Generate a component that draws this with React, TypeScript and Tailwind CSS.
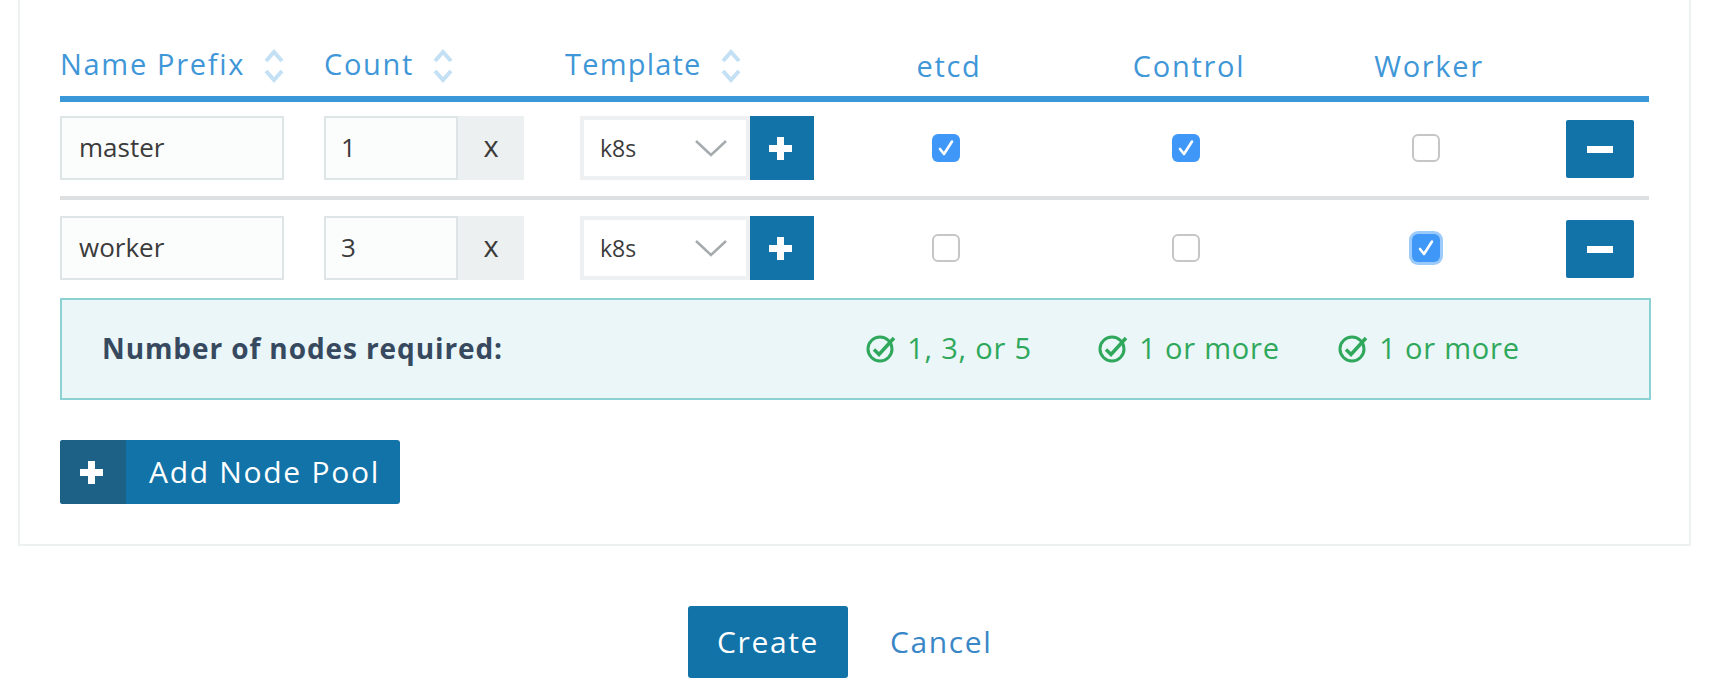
const font = "[font-family:'Open_Sans',sans-serif]";

function Sort() {
  return (
    <svg width="20" height="34" viewBox="0 0 20 34" fill="none" stroke="#c3e0f4" strokeWidth="4" className="ml-[19px] mt-[3px] shrink-0">
      <path d="M2 12 L10 3 L18 12" />
      <path d="M2 22 L10 31 L18 22" />
    </svg>
  );
}

function Plus() {
  return (
    <svg width="23" height="23" viewBox="0 0 23 23" fill="white">
      <rect x="8" y="0" width="7" height="23" />
      <rect x="0" y="8" width="23" height="7" />
    </svg>
  );
}

function Check({ on, focus }: { on?: boolean; focus?: boolean }) {
  return (
    <div className="flex justify-center pr-[6px]">
      <div
        className={
          "flex h-[28px] w-[28px] items-center justify-center rounded-[6px] " +
          (on ? "bg-[#3f97f7] " : "border-2 border-[#c6c6c6] bg-white ") +
          (focus ? "shadow-[0_0_0_3px_#9ccafb]" : "")
        }
      >
        {on && (
          <svg width="18" height="18" viewBox="0 0 18 18" fill="none" stroke="white" strokeWidth="2.6" strokeLinecap="round" strokeLinejoin="round">
            <path d="M3 10 L7 15 L15 2.5" />
          </svg>
        )}
      </div>
    </div>
  );
}

function GreenCheck() {
  return (
    <svg width="30" height="28" viewBox="0 0 30 28" fill="none" stroke="#2fa85c" className="mt-[2px] shrink-0">
      <circle cx="14" cy="14" r="12" strokeWidth="3" />
      <path d="M8 14.5 L13 19.5 L28 3" strokeWidth="3.5" />
    </svg>
  );
}

function Row({ name, count, e, c, w, focus }: { name: string; count: string; e?: boolean; c?: boolean; w?: boolean; focus?: boolean }) {
  return (
    <div className="grid grid-cols-[264px_241px_264px_240px_240px_240px_101px] items-center text-[#3b3b3b]">
      <input
        readOnly
        value={name}
        className="h-[64px] w-[224px] border-2 border-[#dde5e6] bg-[#fbfdfc] px-[17px] pb-[2px] text-[26px] outline-none"
      />
      <div className="flex h-[64px] w-[200px]">
        <input
          readOnly
          value={count}
          className="h-[64px] w-[134px] border-2 border-[#dde5e6] bg-[#fbfdfc] px-[15px] pb-[2px] text-[26px] outline-none"
        />
        <div className="flex w-[66px] items-center justify-center bg-[#edf0f1] pb-[4px] text-[29px]">x</div>
      </div>
      <div className="ml-[15px] flex h-[64px]">
        <div className="flex w-[170px] items-center justify-between border-[4px] border-[#eef0f1] bg-white pl-[16px] pr-[19px] text-[23px]">
          <span>k8s</span>
          <svg width="32" height="17" viewBox="0 0 32 17" fill="none" stroke="#a5aaad" strokeWidth="2.5">
            <path d="M1 1 L16 15 L31 1" />
          </svg>
        </div>
        <div className="flex w-[64px] items-center justify-center bg-[#1173a7] pr-[3px]">
          <Plus />
        </div>
      </div>
      <Check on={e} />
      <Check on={c} />
      <Check on={w} focus={focus} />
      <div className="flex justify-end pr-[16px] pt-[2px]">
        <div className="flex h-[58px] w-[68px] items-center justify-center rounded-[2px] bg-[#1173a7]">
          <div className="h-[7px] w-[26px] bg-white" />
        </div>
      </div>
    </div>
  );
}

function Req({ text }: { text: string }) {
  return (
    <div className="flex items-center justify-center gap-[11px]">
      <GreenCheck />
      <span>{text}</span>
    </div>
  );
}

export default function App() {
  return (
    <div className={"h-[692px] w-[1710px] overflow-hidden bg-white " + font}>
      <div className="ml-[18px] w-[1673px] border-x-2 border-b-2 border-[#eef1f1] px-[40px] pb-[40px]">
        <div className="grid h-[102px] grid-cols-[264px_241px_264px_240px_240px_240px_101px] items-center border-b-[6px] border-[#3a97d8] pt-[32px] text-[29px] tracking-[1.7px] text-[#3f97d8]">
          <div className="flex items-center">Name Prefix<Sort /></div>
          <div className="flex items-center">Count<Sort /></div>
          <div className="flex items-center tracking-[1.2px]">Template<Sort /></div>
          <div className="pt-[3px] text-center">etcd</div>
          <div className="pt-[3px] text-center">Control</div>
          <div className="pt-[3px] text-center">Worker</div>
          <div />
        </div>
        <div className="border-b-4 border-[#dddfe1] pb-[16px] pt-[14px]">
          <Row name="master" count="1" e c />
        </div>
        <div className="pb-[18px] pt-[16px]">
          <Row name="worker" count="3" w focus />
        </div>
        <div className="-mr-[2px] grid h-[102px] grid-cols-[767px_240px_240px_240px] items-center border-2 border-[#8cd2d5] bg-[#eaf6f8] pb-[2px] text-[29px] tracking-[0.8px] text-[#2fa85c]">
          <div className="pl-[40px] text-[28px] font-bold tracking-[0.9px] text-[#36495e]">Number of nodes required:</div>
          <Req text="1, 3, or 5" />
          <Req text="1 or more" />
          <Req text="1 or more" />
        </div>
        <div className="mt-[40px] flex h-[64px] w-[340px] overflow-hidden rounded-[3px] bg-[#1173a7] text-[30px] tracking-[1.7px] text-white">
          <div className="flex w-[66px] items-center justify-center bg-[#1d6286] pr-[3px]">
            <Plus />
          </div>
          <div className="flex flex-1 items-center pb-[2px] pl-[23px]">Add Node Pool</div>
        </div>
      </div>
      <div className="mt-[60px] flex items-center pl-[688px] text-[30px] tracking-[1.6px]">
        <div className="flex h-[72px] w-[160px] items-center justify-center rounded-[3px] bg-[#1173a7] pb-[2px] text-white">Create</div>
        <div className="ml-[42px] pb-[2px] text-[#3a87c8]">Cancel</div>
      </div>
    </div>
  );
}
